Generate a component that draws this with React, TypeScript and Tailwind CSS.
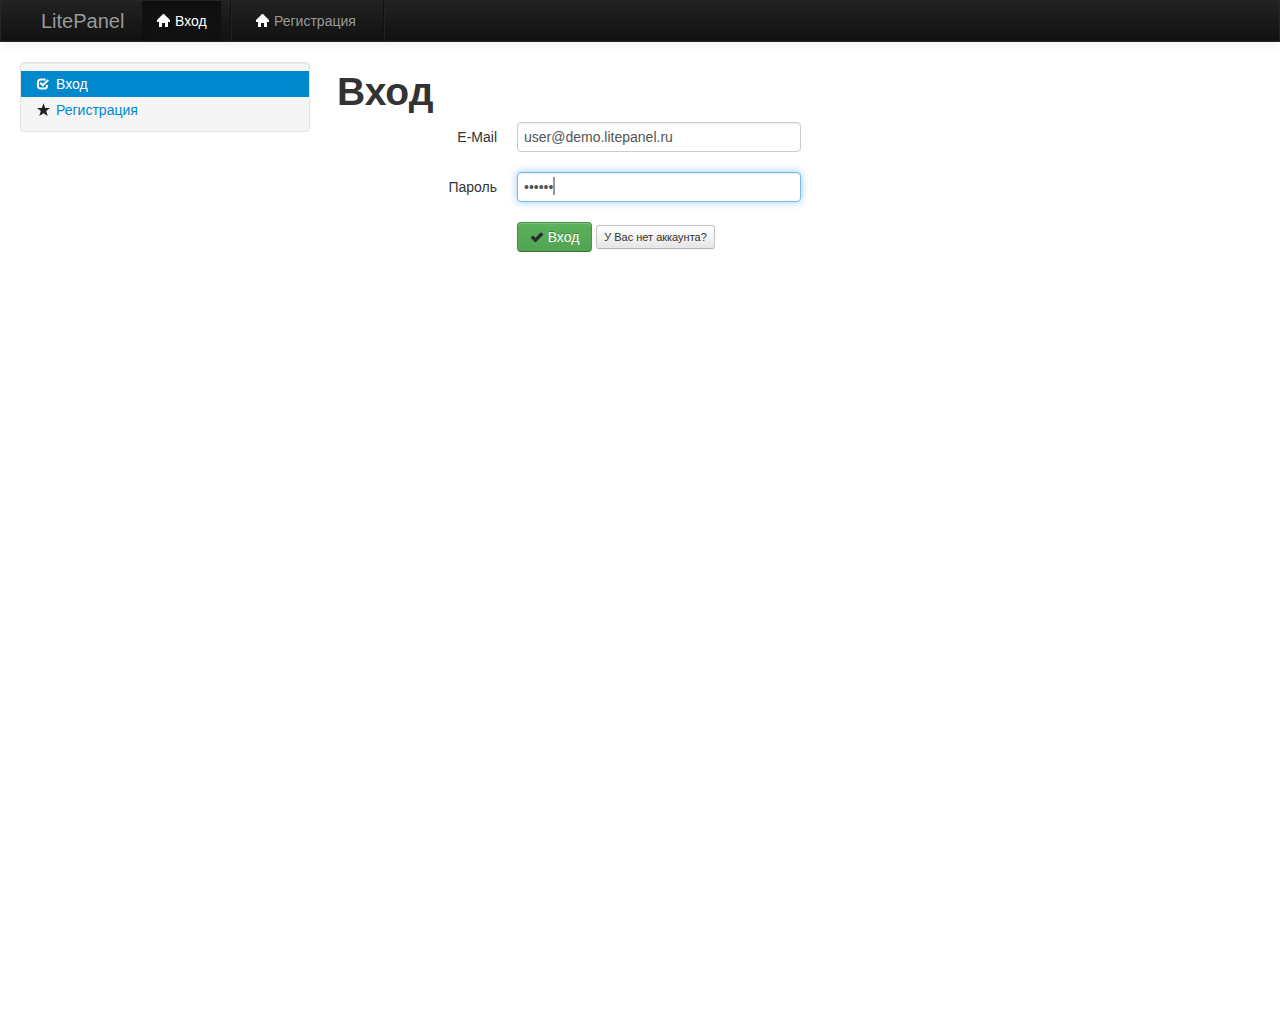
import type { ReactNode } from "react";

function Icon({ children, className = "" }: { children: ReactNode; className?: string }) {
  return (
    <svg viewBox="0 0 14 14" className={`h-3.5 w-3.5 shrink-0 ${className}`} fill="currentColor" aria-hidden="true">
      {children}
    </svg>
  );
}

function HomeIcon() {
  return (
    <Icon className="text-white">
      <path d="M6 0H7L13 6V8H11V13H8V9H5V13H2V8H0V6z" />
    </Icon>
  );
}

function CheckSquareIcon() {
  return (
    <Icon>
      <path
        d="M9.500 2.500H4.500A2.500 2.500 0 0 0 2 5v4A2.500 2.500 0 0 0 4.500 11.500h4A2.500 2.500 0 0 0 11 9V8"
        fill="none"
        stroke="currentColor"
        strokeWidth="1.900"
      />
      <path d="M4.200 5.800 6.800 8.300 12.200 2.900" fill="none" stroke="currentColor" strokeWidth="2.100" />
    </Icon>
  );
}

function StarIcon() {
  return (
    <Icon className="text-[#222222]">
      <path d="M7.500 0.300 9.200 5H14L10.200 8.100 11.700 13 7.500 10.200 3.300 13 4.800 8.100 1 5H5.800z" />
    </Icon>
  );
}

function CheckIcon() {
  return (
    <Icon className="text-[#2b2e2b]">
      <path d="M0.500 7.800 3 5.500 5.500 7.700 11 2.200 13.500 4.400 5.500 12.500z" />
    </Icon>
  );
}

function Divider() {
  return <li aria-hidden="true" className="mx-[9px] h-10 border-l border-r border-l-[#111111] border-r-[#222222]" />;
}

const inputClass =
  "h-[30px] w-full rounded border bg-white px-1.5 py-1 text-sm leading-5 text-[#555555] outline-none";

export default function App() {
  return (
    <div className="font-['Liberation_Sans',Arial,sans-serif] text-sm leading-5 text-[#333333]">
      <header className="border border-[#252525] bg-linear-to-b from-[#222222] to-[#111111] px-5 shadow-[0_1px_10px_rgba(0,0,0,0.1)]">
        <nav className="flex h-10 items-center">
          <a href="#" className="w-[121px] pl-5 text-xl leading-5 text-[#999999]">
            LitePanel
          </a>
          <ul className="flex h-10">
            <li>
              <a
                href="#login"
                aria-current="page"
                className="flex h-10 w-[79px] items-center gap-1 bg-[#111111] pl-[15px] text-white shadow-[inset_0_3px_8px_rgba(0,0,0,0.125)]"
              >
                <HomeIcon />
                Вход
              </a>
            </li>
            <Divider />
            <li>
              <a href="#register" className="flex h-10 w-[133px] items-center gap-1 pl-[15px] text-[#999999]">
                <HomeIcon />
                Регистрация
              </a>
            </li>
            <Divider />
          </ul>
        </nav>
      </header>

      <div className="flex gap-[27px] px-5 pt-5">
        <aside className="w-[290px] shrink-0 self-start rounded border border-[#e3e3e3] bg-[#f5f5f5] py-2 shadow-[inset_0_1px_1px_rgba(0,0,0,0.05)]">
          <ul>
            <li>
              <a href="#login" aria-current="page" className="flex items-center gap-1.5 bg-[#0088cc] px-[15px] py-[3px] text-white">
                <CheckSquareIcon />
                Вход
              </a>
            </li>
            <li>
              <a href="#register" className="flex items-center gap-1.5 px-[15px] py-[3px] text-[#0088cc]">
                <StarIcon />
                Регистрация
              </a>
            </li>
          </ul>
        </aside>

        <main className="min-w-0 flex-1 pt-2.5">
          <h1 className="mb-2.5 text-[39px] leading-10 font-bold">Вход</h1>
          <form
            className="grid grid-cols-[160px_minmax(0,284px)] items-center gap-5"
            onSubmit={(event) => event.preventDefault()}
          >
            <label htmlFor="email" className="text-right">
              E-Mail
            </label>
            <input
              id="email"
              type="text"
              defaultValue="user@demo.litepanel.ru"
              className={`${inputClass} border-[#cccccc] shadow-[inset_0_1px_1px_rgba(0,0,0,0.075)]`}
            />
            <label htmlFor="password" className="text-right">
              Пароль
            </label>
            <div className="relative flex">
              <input
                id="password"
                type="password"
                defaultValue="secret"
                className={`${inputClass} border-[#74b9ef] caret-transparent shadow-[inset_0_1px_1px_rgba(0,0,0,0.075),0_0_8px_rgba(82,168,236,0.6)]`}
              />
              <span aria-hidden="true" className="absolute top-[5px] left-9 h-[18px] w-0.5 bg-[#999999]" />
            </div>
            <div className="col-start-2 flex items-center gap-1">
              <button
                type="submit"
                className="flex h-[30px] w-[75px] items-center justify-center gap-1 rounded border border-[#499249] border-b-[#387038] bg-linear-to-b from-[#5bb35b] to-[#51a351] text-white shadow-[inset_0_1px_0_rgba(255,255,255,0.2),0_1px_2px_rgba(0,0,0,0.05)] text-shadow-[0_-1px_0_rgba(0,0,0,0.25)]"
              >
                <CheckIcon />
                Вход
              </button>
              <button
                type="button"
                className="h-6 w-[119px] rounded-[3px] border border-[#c5c5c5] border-b-[#b3b3b3] bg-linear-to-b from-white to-[#e6e6e6] text-[11px] leading-5 whitespace-nowrap text-[#333333] shadow-[inset_0_1px_0_rgba(255,255,255,0.2),0_1px_2px_rgba(0,0,0,0.05)]"
              >
                У Вас нет аккаунта?
              </button>
            </div>
          </form>
        </main>
      </div>
    </div>
  );
}
